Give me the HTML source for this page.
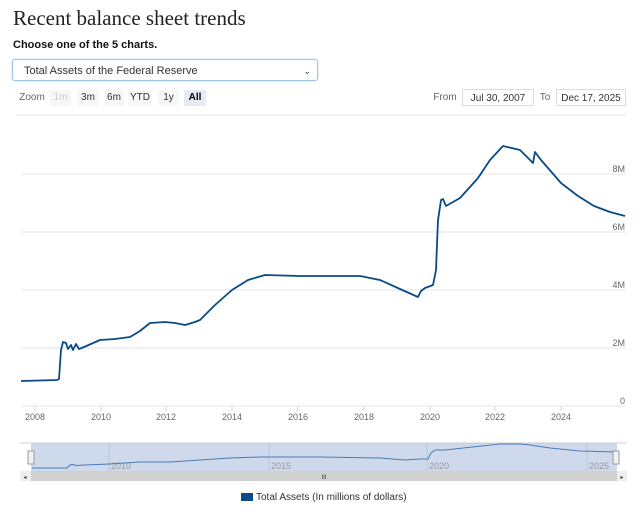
<!DOCTYPE html>
<html><head><meta charset="utf-8"><style>
body{margin:0;background:#fff;width:640px;height:515px;overflow:hidden;font-family:"Liberation Sans",sans-serif;position:relative}
h1{position:absolute;left:13px;top:6px;margin:0;font:400 21px "Liberation Serif",serif;color:#222}
.lab{position:absolute;left:13px;top:39px;font-size:11px;font-weight:bold;color:#111}
.sel{position:absolute;left:12px;top:59px;width:306px;height:22px;border:1px solid #9ec3e6;border-radius:3px;box-shadow:0 0 2px #bcd7f0;font-size:11px;color:#333;line-height:22px;padding-left:11px;box-sizing:border-box}
.sel span{position:absolute;right:6px;top:0;font-size:9px}
.z{position:absolute;top:90px;font-size:10px;color:#333;height:16px;line-height:16px;text-align:center;background:#f7f7f7}
.in{position:absolute;top:89px;height:17px;border:1px solid #ddd;font-size:10px;color:#333;line-height:17px;text-align:center;box-sizing:border-box}
svg{position:absolute;left:0;top:0}
.leg{position:absolute;left:241px;top:492px;font-size:10px;color:#333}
.leg i{display:inline-block;width:12px;height:8px;background:#0a4a86;vertical-align:-1px;margin-right:3px}
</style></head><body>
<h1>Recent balance sheet trends</h1>
<div class="lab">Choose one of the 5 charts.</div>
<div class="sel">Total Assets of the Federal Reserve<span>&#8964;</span></div>
<div class="z" style="left:17px;width:30px;background:none;color:#666">Zoom</div>
<div class="z" style="left:50px;width:21px;color:#ccc">1m</div>
<div class="z" style="left:77px;width:22px">3m</div>
<div class="z" style="left:104px;width:20px">6m</div>
<div class="z" style="left:128px;width:24px">YTD</div>
<div class="z" style="left:158px;width:21px">1y</div>
<div class="z" style="left:184px;width:22px;background:#e6ebf5;font-weight:bold;color:#000">All</div>
<div class="z" style="left:432px;width:26px;background:none;color:#666">From</div>
<div class="in" style="left:462px;width:72px">Jul 30, 2007</div>
<div class="z" style="left:538px;width:14px;background:none;color:#666">To</div>
<div class="in" style="left:556px;width:70px">Dec 17, 2025</div>
<svg width="640" height="515" font-family="Liberation Sans" font-size="9" fill="#666">
<line x1="17" y1="115" x2="626" y2="115" stroke="#e6e6e6"/>
<g stroke="#e6e6e6"><line x1="21" y1="174" x2="626" y2="174"/><line x1="21" y1="232" x2="626" y2="232"/><line x1="21" y1="290" x2="626" y2="290"/><line x1="21" y1="348" x2="626" y2="348"/><line x1="21" y1="406" x2="626" y2="406"/></g>
<g stroke="#ccd6eb"><line x1="35" y1="406" x2="35" y2="411"/><line x1="101" y1="406" x2="101" y2="411"/><line x1="166" y1="406" x2="166" y2="411"/><line x1="232" y1="406" x2="232" y2="411"/><line x1="298" y1="406" x2="298" y2="411"/><line x1="364" y1="406" x2="364" y2="411"/><line x1="430" y1="406" x2="430" y2="411"/><line x1="495" y1="406" x2="495" y2="411"/><line x1="561" y1="406" x2="561" y2="411"/></g>
<g text-anchor="end"><text x="625" y="172">8M</text><text x="625" y="230">6M</text><text x="625" y="288">4M</text><text x="625" y="346">2M</text><text x="625" y="404">0</text></g>
<g text-anchor="middle"><text x="35" y="420">2008</text><text x="101" y="420">2010</text><text x="166" y="420">2012</text><text x="232" y="420">2014</text><text x="298" y="420">2016</text><text x="364" y="420">2018</text><text x="430" y="420">2020</text><text x="495" y="420">2022</text><text x="561" y="420">2024</text></g>
<polyline fill="none" stroke="#0a4a86" stroke-width="1.8" stroke-linejoin="round" points="21,381 57,380 59,379 61,350 63,342 66,343 68,349 71,345 73,350 76,344 79,349 84,347 100,340 115,339 130,337 140,331 150,323 165,322 175,323 185,325 195,322 200,320 215,305 232,290 248,280 265,275 300,276 360,276 380,280 400,289 418,297 421,291 425,288 433,285 436,270 438,220 441,200 443,199 446,206 460,198 470,187 478,178 490,160 503,146 520,150 533,163 535,152 541,160 561,183 578,196 594,206 610,212 625,216"/>
<rect x="31" y="443" width="586" height="28" fill="#cfd9ec"/>
<line x1="20" y1="443" x2="627" y2="443" stroke="#ccc"/>
<g stroke="#b8c4dd"><line x1="109" y1="443" x2="109" y2="471"/><line x1="269" y1="443" x2="269" y2="471"/><line x1="427" y1="443" x2="427" y2="471"/><line x1="587" y1="443" x2="587" y2="471"/></g>
<g fill="#999" font-size="9"><text x="111" y="469">2010</text><text x="271" y="469">2015</text><text x="429" y="469">2020</text><text x="589" y="469">2025</text></g>
<polyline fill="none" stroke="#4a7bb7" stroke-width="1" points="32,468 67,468 70,465 73,464.5 76,465.5 85,465 109,464 140,462 150,462 170,462 200,460 230,458 260,457 320,457 380,458 405,460 420,459 428,459 431,453 435,450 445,450 500,444 520,444 530,445 550,448 580,451 617,452"/>
<rect x="31" y="471" width="586" height="10" fill="#d0d0d0"/>
<rect x="20" y="471" width="11" height="10" fill="#eee"/><rect x="617" y="471" width="10" height="10" fill="#eee"/>
<text x="25" y="479" font-size="6" fill="#333" text-anchor="middle">◂</text><text x="622" y="479" font-size="6" fill="#333" text-anchor="middle">▸</text>
<text x="324" y="479" font-size="6" fill="#333" text-anchor="middle">III</text>
<rect x="28" y="451" width="6" height="13" fill="#f2f2f2" stroke="#999"/><rect x="613" y="451" width="6" height="13" fill="#f2f2f2" stroke="#999"/>
</svg>
<div class="leg"><i></i>Total Assets (In millions of dollars)</div>
</body></html>
